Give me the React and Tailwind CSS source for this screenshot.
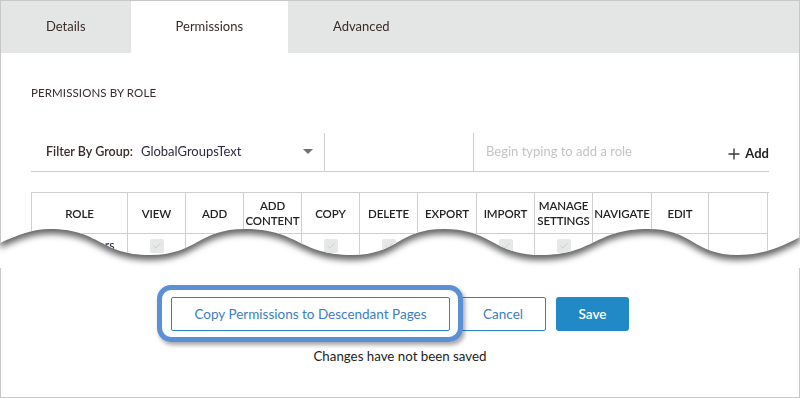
import React from 'react'
import { Check } from 'lucide-react'

const font = 'font-["Lato","Open_Sans",sans-serif]'

const tabs = ['Details', 'Permissions', 'Advanced']

const columns = [
  ['ROLE'],
  ['VIEW'],
  ['ADD'],
  ['ADD', 'CONTENT'],
  ['COPY'],
  ['DELETE'],
  ['EXPORT'],
  ['IMPORT'],
  ['MANAGE', 'SETTINGS'],
  ['NAVIGATE'],
  ['EDIT'],
  [''],
]

// which columns show a (disabled) checked box in the visible row
const checked = [false, true, false, false, true, true, false, true, true, false, false, false]

const Checkbox = () => (
  <span className="w-[14px] h-[14px] rounded-[2px] bg-[#e6e7e7] flex items-center justify-center">
    <Check size={10} strokeWidth={2} className="text-[#c9cbcb]" />
  </span>
)

const TabBar = () => (
  <div className="flex h-[52px] bg-[#e4e6e5]">
    {tabs.map((t) => (
      <div
        key={t}
        className={`px-[45px] flex items-center text-[13px] text-[#3b2b2b] ${
          t === 'Permissions' ? 'bg-white' : ''
        }`}
      >
        {t}
      </div>
    ))}
  </div>
)

const FilterRow = () => (
  <div className="flex h-[39px] border-b border-[#cfcfcf]">
    <div className="w-[294px] flex items-center pl-[15px] pr-[11px] border-r border-[#cfcfcf]">
      <span className="text-[12.5px] font-semibold text-[#3b2b2b]">Filter By Group:</span>
      <span className="ml-[8px] text-[13px] text-[#2e2a44]">GlobalGroupsText</span>
      <svg width="10" height="6" viewBox="0 0 10 6" className="ml-auto">
        <path d="M0 0 H10 L5 5 Z" fill="#707070" />
      </svg>
    </div>
    <div className="w-[149px] border-r border-[#cfcfcf]" />
    <div className="flex-1 flex items-center pl-[12px]">
      <span className="text-[13px] text-[#c3c3c3]">Begin typing to add a role</span>
      <span className="ml-auto flex items-center gap-[5px] mt-[3px]">
        <svg width="12" height="12" viewBox="0 0 12 12">
          <path d="M6 0.5 V11.5 M0.5 6 H11.5" stroke="#3a3a3a" strokeWidth="1.4" />
        </svg>
        <span className="text-[13px] font-bold text-[#222]">Add</span>
      </span>
    </div>
  </div>
)

const PermissionsTable = () => (
  <div className="mt-[20px] border-l border-t border-[#cfcfcf] grid grid-cols-[96px_58px_58px_58px_58px_58px_59px_58px_58px_59px_57px_59px]">
    {columns.map((c, i) => (
      <div
        key={'h' + i}
        className="h-[41px] border-r border-b border-[#cfcfcf] flex flex-col items-center justify-center text-[11.5px] font-semibold leading-[15px] text-[#222] tracking-[-0.1px]"
      >
        {c.map((line, j) => (
          <span key={j}>{line}</span>
        ))}
      </div>
    ))}
    {columns.map((c, i) => (
      <div
        key={'r' + i}
        className="h-[40px] border-r border-b border-[#cfcfcf] flex justify-center pt-[5px]"
      >
        {i === 0 ? (
          <span className="text-[12.5px] leading-[14px] text-[#2e2a44] ml-[32px]">Editors</span>
        ) : checked[i] ? (
          <Checkbox />
        ) : null}
      </div>
    ))}
  </div>
)

export default function App() {
  return (
    <div className={`w-[800px] h-[398px] bg-white overflow-hidden ${font}`}>
      {/* upper sheet, torn along a wave */}
      <div className="drop-shadow-[0_5px_3px_rgba(0,0,0,0.6)]">
        <div className="h-[268px] overflow-hidden bg-white border-t border-l border-r border-[#c8c8c8] [clip-path:path('M0,0_L0,243_C18,235_33,229_50,229_C100,229_100,255_150,255_C197,255_198,229_245,229_C298,229_299,255_352,255_C398,255_398,229_444,229_C492,229_493,255_541,255_C594,255_595,229_648,229_C693,229_693,255_738,255_C765,255_785,245_800,237_L800,0_Z')]">
          <TabBar />
          <div className="pl-[30px] pr-[30px]">
            <div className="mt-[33px] text-[11.5px] leading-[14px] text-[#3b2b2b] tracking-[0.1px]">
              PERMISSIONS BY ROLE
            </div>
            <div className="mt-[33px]">
              <FilterRow />
            </div>
            <PermissionsTable />
          </div>
        </div>
      </div>

      {/* lower sheet with actions */}
      <div className="h-[130px] border-l border-r border-b border-[#c8c8c8] flex flex-col items-center">
        <div className="mt-[29px] flex gap-[10px]">
          <div className="relative">
            <button className="h-[34px] w-[279px] border border-[#2a87c3] rounded-[2px] text-[13.5px] text-[#3a7dc2] bg-white">
              Copy Permissions to Descendant Pages
            </button>
            <div className="absolute -left-[14px] -top-[12px] -right-[13px] -bottom-[11px] z-10 border-[5px] border-[#5b8fd6] rounded-[14px] shadow-[2px_3px_4px_rgba(0,0,0,0.35)] pointer-events-none" />
          </div>
          <button className="h-[34px] w-[86px] border border-[#2a87c3] rounded-[2px] text-[13.5px] text-[#3a7dc2] bg-white">
            Cancel
          </button>
          <button className="h-[34px] w-[73px] rounded-[3px] bg-[#2189c6] text-[13.5px] font-semibold text-white">
            Save
          </button>
        </div>
        <div className="mt-[16px] text-[13.3px] text-[#222]">Changes have not been saved</div>
      </div>
    </div>
  )
}
